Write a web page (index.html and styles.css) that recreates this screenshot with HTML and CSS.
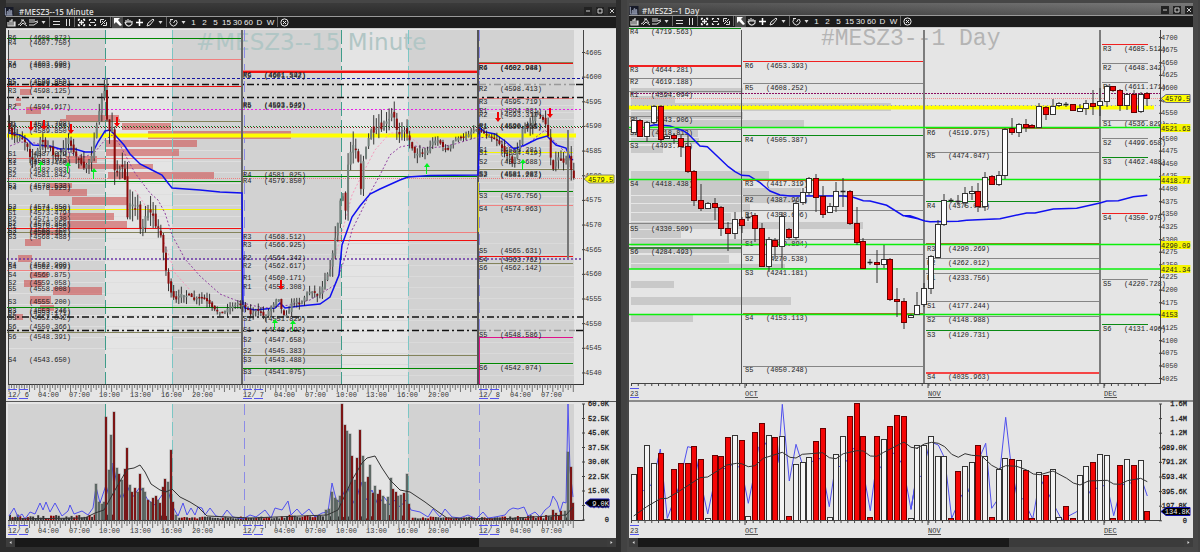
FILE: index.html
```html
<!DOCTYPE html>
<html lang="en">
<head>
<meta charset="utf-8">
<title>#MESZ3 charts</title>
<link rel="stylesheet" href="styles.css">
</head>
<body>
<svg class="defs" aria-hidden="true">
  <symbol id="i-bars" viewBox="0 0 11 11"><path d="M2 5v4h2V4h2v5M6 2v7h2V5h1v4H2" fill="none" stroke="#ddd" stroke-width="1.2"/></symbol>
  <symbol id="i-wave" viewBox="0 0 11 11"><path d="M1 8l2-1 3-4 3 4M3 9l3-3 4 3M4 3h3" fill="none" stroke="#ddd"/></symbol>
  <symbol id="i-lines" viewBox="0 0 11 11"><path d="M1 3h6M1 5h5l4-1M1 8h5l4-3" fill="none" stroke="#ddd"/></symbol>
  <symbol id="i-caret" viewBox="0 0 9 11"><path d="M2.500 4h4L4.500 7z" fill="#ddd"/></symbol>
  <symbol id="i-eq" viewBox="0 0 11 11"><path d="M2 4.500h7M2 7.500h7" stroke="#ddd"/></symbol>
  <symbol id="i-pause" viewBox="0 0 11 11"><path d="M4.500 2v7M7.500 2v7" stroke="#ddd"/></symbol>
  <symbol id="i-plusbox" viewBox="0 0 11 11"><path d="M2.500 4V2.500H4M7 2.500h1.500V4M8.500 7v1.500H7M4 8.500H2.500V7M3 5.500h5M5.500 3v5" fill="none" stroke="#eee" stroke-width="1.300"/></symbol>
  <symbol id="i-minusbox" viewBox="0 0 11 11"><path d="M2.500 4V2.500H4M7 2.500h1.500V4M8.500 7v1.500H7M4 8.500H2.500V7M3 5.500h5" fill="none" stroke="#ddd" stroke-width="1.200"/></symbol>
  <symbol id="i-slashbox" viewBox="0 0 11 11"><path d="M2.500 6V2.500H6M8.500 5v3.500H5M3 8l5-5M4 4l3 3" fill="none" stroke="#ddd"/></symbol>
  <symbol id="i-arrow" viewBox="0 0 11 11"><path d="M2 1h6L6 3l4 5-2 1-4-4-2 2z" fill="#fff"/></symbol>
  <symbol id="i-hand" viewBox="0 0 11 11"><path d="M3 6V3M5 5V2M7 5V3M9 7V4M2 5c1 5 5 5 7 2V5H3" fill="none" stroke="#ddd" stroke-width="1.200"/></symbol>
  <symbol id="i-plus" viewBox="0 0 11 11"><path d="M2 5.500h7M5.500 2v7" stroke="#fff" stroke-width="1.500"/></symbol>
  <symbol id="i-pencil" viewBox="0 0 11 11"><path d="M2 9l1-3 5-4 1 1-4 5z" fill="none" stroke="#ddd"/></symbol>
  <symbol id="i-clock" viewBox="0 0 11 11"><path d="M3 3a3.500 3.500 0 1 0 5 0M2 2.500h3M5.500 6l2-3" fill="none" stroke="#ddd"/></symbol>
  <symbol id="i-close" viewBox="0 0 11 11"><circle cx="5.500" cy="5.500" r="3.600" fill="none" stroke="#eee"/><path d="M4 4l3 3M7 4L4 7" stroke="#eee"/></symbol>
  <symbol id="i-logo" viewBox="0 0 10 10"><path d="M0 0h10v10H0z" fill="#171a28"/><path d="M1 1v8h8M3 9V5h1v4M5 9V3h1v6M7 9V4h1v5" fill="none" stroke="#9aa3b8"/></symbol>
</svg>
<main class="desktop">
  <section class="window">
    <header class="titlebar">
      <svg class="logo"><use href="#i-logo"/></svg>
      <h1 class="title">#MESZ3--15 Minute</h1>
      <button class="ctl" aria-label="Minimize"><svg viewBox="0 0 8 8"><path d="M2 4h4"/></svg></button>
      <button class="ctl" aria-label="Maximize"><svg viewBox="0 0 8 8"><path d="M2 2h4v4H2z"/></svg></button>
      <button class="ctl" aria-label="Close"><svg viewBox="0 0 8 8"><path d="M2 2l4 4M6 2L2 6"/></svg></button>
    </header>
    <nav class="toolbar" aria-label="Chart tools"></nav>
    <svg class="chart" id="intraday" viewBox="6 29 610 509" role="img" aria-label="15 minute chart"></svg>
    <div class="scroll"><button class="step" aria-label="Scroll left"><svg viewBox="0 0 8 9"><path d="M5 3L3 4.500 5 6z"/></svg></button><div class="track"></div><div class="thumb thumb-a"></div><button class="step" aria-label="Scroll right"><svg viewBox="0 0 8 9"><path d="M3 3l2 1.500L3 6z"/></svg></button></div>
  </section>
  <section class="window active">
    <header class="titlebar">
      <svg class="logo"><use href="#i-logo"/></svg>
      <h1 class="title">#MESZ3--1 Day</h1>
      <button class="ctl" aria-label="Minimize"><svg viewBox="0 0 8 8"><path d="M2 4h4"/></svg></button>
      <button class="ctl" aria-label="Maximize"><svg viewBox="0 0 8 8"><path d="M2 2h4v4H2z"/></svg></button>
      <button class="ctl" aria-label="Close"><svg viewBox="0 0 8 8"><path d="M2 2l4 4M6 2L2 6"/></svg></button>
    </header>
    <nav class="toolbar" aria-label="Chart tools"></nav>
    <svg class="chart" id="daily" viewBox="629 28 564 510" role="img" aria-label="Daily chart"></svg>
    <div class="scroll"><button class="step" aria-label="Scroll left"><svg viewBox="0 0 8 9"><path d="M5 3L3 4.500 5 6z"/></svg></button><div class="track"></div><div class="thumb thumb-b"></div><button class="step" aria-label="Scroll right"><svg viewBox="0 0 8 9"><path d="M3 3l2 1.500L3 6z"/></svg></button></div>
  </section>
</main>
<script src="charts.js"></script>
</body>
</html>
```
FILE: styles.css
```css
* { box-sizing: border-box; }
body { margin: 0; background: #444; font-family: "Open Sans", sans-serif; }
.defs { display: none; }
.desktop { display: grid; grid-template-columns: 627fr 573fr; align-items: start; min-height: 100vh; background: #424242; }
.window { border: solid #2d2d2d; border-width: 0 5px 5px 6px; margin-right: 6px; min-width: 0; }
.window.active { border-color: #474747; border-width: 0 5px 5px 2px; margin-right: 2px; }
.titlebar { display: flex; align-items: center; gap: 3px; height: 17px; padding: 3px 0 0 4px; border-top: 3px solid #464646; border-bottom: 1px solid #999; background: linear-gradient(#3b3b3b, #2a2a2a); }
.active .titlebar { height: 16px; padding: 2px 0 0 4px; background: linear-gradient(90deg, rgba(40,40,40,.5), rgba(120,120,120,.4)), linear-gradient(#7a7a7a, #4c4c4c); }
.logo { width: 10px; height: 9px; margin-left: -6px; }
.active .logo { margin-left: -4px; }
.title { flex: 1; margin: 0 0 0 2px; font-size: 8px; line-height: 9px; font-weight: 600; color: #ddd; }
.active .title { margin-left: 0; }
.ctl { width: 8px; height: 8px; margin: 0 0 0 1px; padding: 0; border: 0; background: #222; }
.ctl svg { display: block; width: 8px; height: 8px; fill: none; stroke: #ccc; }
.toolbar { display: flex; height: 12px; background: #1c1c1c; border-bottom: 1px solid #ccc; }
.tool { width: 11px; height: 11px; padding: 0; border: 0; background: none; color: #eee; font: 8px/11px "Liberation Sans", sans-serif; white-space: nowrap; display: flex; justify-content: center; }
.tool svg { width: 11px; height: 11px; flex: none; }
.tool.caret { width: 9px; }
.tool.caret svg { width: 9px; }
.tool.on { background: #4a4a4a; }
.sep { width: 1px; height: 10px; margin: 0 1px; background: #666; }
.chart { display: block; width: 100%; height: auto; background: #e5e5e5; }
.chart text { font-family: "Liberation Mono", monospace; font-size: 7px; fill: #1c1c1c; white-space: pre; }
.chart text.axis { fill: #333; }
.chart text.vol { fill: #222; text-anchor: end; stroke: #222; stroke-width: .3; }
.chart text.vtag { fill: #eee; text-anchor: end; }
.chart text.mark-a { font-family: "DejaVu Sans", sans-serif; font-size: 23px; fill: #b1c6c5; }
.chart text.mark-b { font-size: 23px; fill: #b4b4b4; }
.scroll { display: flex; height: 9px; background: #2d2d2d; }
.step { width: 9px; padding: 0; border: 0; background: #3d3d3d; }
.step svg { display: block; width: 9px; height: 9px; fill: #ddd; }
.track { flex: 1; background: #191919; }
.thumb { background: #3b3b3b; }
.thumb-a { width: 21%; }
.thumb-b { width: 31%; }
```
FILE: charts.js
```js
const NS = "http://www.w3.org/2000/svg";
const tools = ["bars", "wave", "lines", "caret", "|", "eq", "pause", "|", "plusbox", "minusbox", "slashbox", "|", "arrow", "hand", "plus", "pencil", "caret", "|", "clock", "caret", "#1", "#2", "#5", "#15", "#30", "#60", "#D", "#W", "|", "close"];
document.querySelectorAll(".toolbar").forEach(bar => {
  bar.innerHTML = tools.map(t => t === "|" ? '<span class="sep"></span>'
    : t[0] === "#" ? `<button class="tool">${t.slice(1)}</button>`
    : `<button class="tool${t === "caret" ? " caret" : t === "arrow" ? " on" : ""}" aria-label="${t}"><svg><use href="#i-${t}"/></svg></button>`).join("");
});

function pen(id) {
  const root = document.getElementById(id);
  const add = (tag, attrs, text) => {
    const el = document.createElementNS(NS, tag);
    for (const k in attrs) el.setAttribute(k, attrs[k]);
    if (text !== undefined) el.textContent = text;
    root.appendChild(el);
  };
  return {
    line: (x1, y1, x2, y2, c, w = 1, dash) => add("line", Object.assign({ x1, y1, x2, y2, stroke: c, "stroke-width": w }, dash ? { "stroke-dasharray": dash } : {})),
    rect: (x, y, width, height, fill, stroke) => add("rect", Object.assign({ x, y, width, height, fill }, stroke ? { stroke } : {})),
    poly: (points, c, w = 1, dash) => add("polyline", Object.assign({ points: points.join(" "), fill: "none", stroke: c, "stroke-width": w }, dash ? { "stroke-dasharray": dash } : {})),
    shape: (d, fill, stroke = "none") => add("path", { d, fill, stroke }),
    text: (x, y, s, cls = "") => add("text", { x, y: y + 2, class: cls }, s)
  };
}
let seed = 7;
const rnd = () => (seed = (seed * 16807) % 2147483647) / 2147483647;
const nums = s => s.trim().split(/\s+/).map(p => p.split(",").map(Number));
// "38 R6 4608.872; ..." -> pivot captions in two columns
const pivots = (p, x, s) => s.split(";").forEach(r => {
  const [y, n, v] = r.trim().split(" ");
  p.text(x, +y, n);
  p.text(x + 21, +y, `(${v})`);
});
// "y,colour[,2]": thick levels sit on whole units, thin ones on halves
const levels = (p, x1, x2, s) => s.trim().split(/\s+/).forEach(r => {
  const [y, c, w] = r.split(",");
  const yy = w ? Math.round(+y) : Math.floor(+y) + .5;
  p.line(x1, yy, x2, yy, c, w || 1);
});
const at = (pts, x) => {
  for (let i = 1; i < pts.length; i++) if (x <= pts[i][0]) {
    const [a, b] = pts[i - 1], [c, d] = pts[i];
    return b + (d - b) * (x - a) / (c - a);
  }
  return pts[pts.length - 1][1];
};

/* 15 minute chart */
{
  const p = pen("intraday");
  for (const [y, h] of [[30, 354], [404, 116]]) {
    p.rect(8, y, 566, h, "#d2d2d2");
    p.rect(105, y, 67, h, "#e4e4e4");
    p.rect(341, y, 67, h, "#e4e4e4");
  }
  for (let y = 150; y < 350; y += 11) p.line(8, y + .5, 242, y + .5, "#dedede");
  for (let y = 232; y < 384; y += 11) p.line(243, y + .5, 574, y + .5, "#dadada");
  for (let y = 105; y < 210; y += 7) p.line(479, y + .5, 574, y + .5, "#dcdcdc");
  p.text(196, 48, "#MESZ3--15 Minute", "mark-a");

  nums("20,89,11,6 16,98,5,3 15,103,6,3 26,107,15,7 66,115,53,4 60,119,60,3 122,123,49,7 148,131,143,3 148,135,143,4 106,140,91,7 106,149,73,7 66,156,31,7 78,164,75,5 108,172,106,7 49,183,23,5 49,189,38,7 72,197,56,8 60,213,54,7 67,221,60,7 30,230,30,5 25,239,16,7 18,255,14,7 30,272,18,6 24,280,18,7 53,287,49,8 30,296,21,8 40,305,14,6 15,314,8,6")
    .forEach(r => p.rect(...r, "rgba(207,92,92,.65)"));

  for (const [a, b] of [[30, 384], [404, 520]]) {
    for (const x of [105.5, 341.5]) p.line(x, a, x, b, "#3f9c8a", 1, "14 4");
    for (const x of [172.5, 408.5]) p.line(x, a, x, b, "#7cc6c4", 1, "14 4");
    for (const x of [244.5, 479.5]) p.line(x, a, x, b, "#8c8ce6", 1, "11 6");
  }
  const G = "#008800", S = "#f08080", R = "#f01010", O = "#83835a", K = "#111";
  levels(p, 7, 242, `38.5,${G} 59.5,${S} 86.500,${R} 121,${O} 158.500,${S} 181.500,${G} 209.500,#f5f500 228.500,${R} 232.500,${O} 270,${S} 307.500,${G} 332.500,${O}`);
  levels(p, 243, 478, `70,${S} 72,${R},2 170.500,${O} 176.500,${G} 232.500,${S} 240,${R} 355.500,${O} 368,${G}`);
  levels(p, 479, 573, `62.5,${O} 63.500,${R} 98,${S} 152.500,#f5f500 169,${O} 191.500,${G} 205,${S} 256,${R} 263.500,${O} 337,#e0128c 363,${G}`);
  p.line(7, 135.500, 576, 135.500, "#ff0", 4);
  p.line(7, 78.500, 583, 78.500, "#1414a0", 1, "3 2");
  for (const y of [97.500, 317]) p.line(7, y, 583, y, K, 1.5, "7 3 2 3");
  for (const y of [84.500, 330.500]) {
    p.line(7, y, 478, y, K, 1.5, "7 3 2 3");
    p.line(479, y, 575, y, "#999", 1.5, "7 3 2 3");
    p.line(576, y, 583, y, K, 1.5);
  }
  p.line(7, 109.500, 583, 109.500, "#e820e8", 1, "2 2");
  p.line(7, 126.500, 583, 126.500, "#0a7a20", 1, "1 2");
  p.line(8, 127.500, 583, 127.500, "#801010", 1, "1 2");
  p.line(7, 178.500, 583, 178.500, "#ef8080", 1, "1 1");
  p.line(7, 259, 583, 259, "#6a35a8", 1.5, "2 2");
  p.line(8.500, 30, 8.500, 384, "#444");
  p.line(242, 30, 242, 384, "#666", 2);
  p.line(478, 30, 478, 384, "#555", 2);
  p.line(478.500, 182, 478.500, 232, "#d2c810");
  p.line(479.500, 337, 479.500, 384, "#e0128c");

  pivots(p, 8, "38 R6 4608.872;43 R4 4607.750;64 R4 4603.690;66 A6 4603.998;82 R5 4599.850;84 R4 4599.358;91 R3 4598.125;107 R2 4594.917;124 R1 4591.798;126 R4 4591.256;131 R1 4589.850;154 S1 4587.079;161 R3 4583.779;163 S1 4583.400;170 S2 4582.083;175 S2 4581.842;186 S3 4578.533;188 R4 4578.925;207 S2 4574.850;209 R2 4574.339;213 S1 4573.479;219 R2 4571.038;224 S2 4570.858;226 R1 4570.456;231 S3 4568.750;233 S2 4569.361;237 S3 4568.488;265 R4 4562.900;267 S4 4562.499;275 S4 4560.875;283 S2 4559.058;289 S5 4558.008;302 S3 4555.200;311 R3 4553.246;313 S2 4553.171;318 S3 4552.042;327 S6 4550.366;337 S6 4548.391;360 S4 4543.650");
  pivots(p, 243, "75 R6 4601.592;76 R5 4601.342;105 R5 4593.546;106 R6 4593.922;175 R4 4581.025;181 R4 4579.850;237 R3 4568.512;245 R3 4566.925;258 R2 4564.342;266 R2 4562.617;278 R1 4560.171;287 R1 4558.308;319 S1 4551.829;330 S1 4548.692;340 S2 4547.658;351 S2 4545.383;360 S3 4543.488;372 S3 4541.075");
  pivots(p, 479, "68 R4 4602.988;68 R6 4602.944;89 R2 4598.413;102 R3 4595.719;111 R1 4594.081;115 R2 4593.313;126 R1 4590.406;127 P1 4590.985;150 S1 4585.281;153 S1 4584.419;162 S2 4583.688;174 S3 4581.087;175 S2 4581.283;196 S3 4576.756;209 S4 4574.063;251 S5 4565.631;260 S4 4563.762;268 S6 4562.142;335 S5 4548.586;368 S6 4542.074");

  const price = nums("9,128 13,137 17,135 22,138 27,145 30,157 33,160 37,152 41,137 45,148 49,143 53,155 57,157 61,153 65,146 69,137 72,150 76,156 80,162 84,168 88,162 92,155 95,135 98,118 101,102 105,89 107,120 110,133 113,123 114,170 118,172 122,165 125,180 127,220 131,198 134,210 138,205 141,235 144,222 147,210 150,212 153,215 155,226 159,228 162,240 164,258 167,277 170,290 173,297 177,300 180,293 185,296 190,295 194,300 198,297 203,298 208,302 213,308 218,312 223,313 228,308 233,306 238,303 243,305 247,308 251,315 256,310 261,312 265,318 270,308 274,304 278,296 281,308 284,315 288,315 291,303 295,300 299,304 303,300 307,293 311,291 315,293 318,296 322,288 326,276 330,270 334,245 338,222 341,195 344,197 346,215 348,165 352,145 355,145 359,165 361,190 364,155 368,140 371,130 374,133 378,125 382,130 386,122 390,118 393,110 396,128 399,135 403,128 408,135 412,148 416,155 420,152 424,155 428,150 433,141 438,140 443,147 448,150 453,141 458,138 463,137 468,135 473,130 478,129 482,132 487,135 492,137 497,140 502,148 506,155 510,158 513,165 516,152 520,145 523,125 526,127 530,126 534,118 538,113 542,118 546,125 548,135 551,160 554,172 557,155 560,160 564,163 568,155 573,178");
  const swing = nums("9,10 90,11 120,18 160,14 175,9 240,6 300,8 325,8 340,16 375,15 405,12 430,8 480,5 510,9 550,11 573,12");
  p.poly(nums("135,190 145,205 155,220 167,250 175,273 190,290"), "#f59abc", 1, "2 2");
  p.poly(nums("322,296 340,240 352,195 362,175 375,150 390,133 405,133 420,145"), "#f59abc", 1, "2 2");
  p.poly(nums("10,146 20,142 35,143 60,150 85,157 95,152 105,140 112,135 120,145 135,173 150,193 158,200 165,213 172,235 185,259 200,276 220,294 235,300 250,305 265,308 290,305 310,300 335,285 345,258 352,230 362,210 370,193 380,175 390,155 400,147 410,145 425,148 440,147 455,144 475,138 490,137 505,143 515,152 530,142 545,130 555,142 568,155"), "#9040a0", 1, "2 2");
  p.poly(nums("9,133 20,135 27,139 33,145 50,146 60,149 75,149 85,152 93,152 98,142 105,131 110,130 115,135 124,145 130,154 140,164 152,170 162,175 168,183 172,188 200,190 220,192 242,193 243,305 245,308 255,310 265,309 275,308 280,303 285,308 300,306 320,304 330,297 339,275 342,245 352,217 360,206 370,194 380,189 400,180 408,177 430,175.500 478,175 480,128 485,132 495,134 505,141 514,149 525,145 537,139 547,136 556,145 566,148 570,158 573,160"), "#1010f0", 1.500);
  let prev = 126;
  for (let x = 9.500; x < 574; x += 2.565) {
    const c = at(price, x), s = at(swing, x);
    const o = prev + (rnd() - .5) * s * .5;
    const top = Math.min(o, c), h = Math.max(1.500, Math.abs(c - o));
    p.line(x, top - rnd() * s * .9, x, top + h + rnd() * s * .9, "#222", .900);
    p.rect(x - 1, top, 2, h, c > o ? "#8b0a0a" : "#74827d");
    prev = c;
  }
  p.line(568, 130, 568, 258, "#777", 2);
  for (const [x, y] of nums("31,131 44,130 71,134 117,127 281,290 498,122 550,118"))
    p.shape(`M${x} ${y}l-3-4h2v-6h2v6h2z`, "#f00000");
  for (const [x, y] of nums("41,161 68,162 94,168 275,319 293,320 427,163 523,159"))
    p.shape(`M${x} ${y}l-3 4h2v7h1v-7h3z`, "#00f020");

  /* volume pane */
  const big = {};
  nums("96,36,0 99,18,0 102,16,0 104,18,0 106,103,1 109,50,0 111,85,0 114,108,1 117,52,0 119,46,1 122,40,0 125,51,1 127,72,1 130,35,0 132,28,1 135,32,1 138,28,0 140,46,1 143,32,0 145,28,0 148,20,1 151,18,0 153,22,1 156,24,1 158,20,0 160,17,1 163,33,1 165,41,1 168,38,0 171,70,1 173,18,1 176,5,0 326,10,0 329,11,0 332,28,0 335,22,0 337,20,0 340,24,0 342,116,1 345,95,1 347,89,0 350,86,0 352,64,1 355,40,0 357,62,1 360,90,1 363,64,0 365,38,0 368,43,1 370,55,0 373,27,1 375,34,0 378,26,1 380,30,1 383,24,0 385,16,0 388,23,0 391,42,0 393,31,1 396,28,1 398,24,0 401,25,0 404,27,1 407,46,0 409,16,1 553,10,1 556,7,1 561,9,1 565,9,0 568,68,0 571,53,1 573,17,1")
    .forEach(([x, h, r]) => big[x] = [h, r]);
  const grown = Object.keys(big).map(Number);
  for (let x = 10; x < 574; x += 2.565)
    if (!grown.some(g => Math.abs(g - x) < 1.300)) {
      const h = 1.500 + rnd() * ((x > 180 && x < 275) || (x > 412 && x < 510) ? 2 : 4);
      p.rect(x - 1, 520 - h, 2, h, rnd() > .6 ? "#800" : "#333");
    }
  p.poly(nums("9,516 14,508 18,517 22,514 25,519 30,512 35,514 40,503 43,510 46,502 50,512 55,503 62,516 68,511 70,505 74,514 82,511 88,515 93,508 96,487 100,503 106,485 110,500 113,463 118,490 122,500 127,485 132,498 140,487 148,500 155,505 162,495 168,490 172,505 178,516 183,503 187,515 191,508 195,515 198,507 202,508 205,515 210,508 216,516 222,517 227,510 233,517 243,519 250,515 256,517 265,510 271,518 275,508 282,510 288,501 291,515 297,509 302,515 309,509 315,517 322,513 328,512 332,483 337,503 342,497 347,485 351,497 355,505 361,482 366,500 372,490 378,505 384,497 390,505 394,500 400,507 406,500 411,510 420,512 428,517 433,509 440,517 445,509 452,517 460,518 468,515 476,519 483,512 488,518 495,517 505,515 509,510 513,508 518,509 524,507 528,516 535,512 540,517 545,510 550,506 553,496 557,502 560,512 563,502 566,503 568,404 570,470 573,497"), "#5050ee", 1);
  grown.forEach(x => p.rect(x - 1, 520 - big[x][0], 2, big[x][0], big[x][1] ? "#8b0a0a" : "#66736e", "#4446"));
  p.poly(nums("9,519 85,518 95,513 104,510 115,490 125,473 128,469 134,468 140,465 145,472 151,484 160,490 166,492 172,489 180,497 190,502 198,507 207,516 250,518 327,515 338,510 345,495 352,480 362,463 367,458 375,456 382,468 390,480 400,490 410,492 425,502 437,511 447,518 500,519 566,515 573,507"), "#333", 1);

  /* axes */
  p.line(6, 401.500, 616, 401.500, "#555");
  for (const y of [384, 520]) {
    p.line(8, y + .500, 584, y + .500, "#333");
    let i = 0;
    for (let x = 9; x < 575; x += 2.565, i++) p.line(x, y, x, y + (i % 4 === 0 ? 8 : i % 2 ? 4 : 6), "#555", .800);
    for (const [x, s] of [[8, "12/ 6"], [38, "04:00"], [69, "07:00"], [99, "10:00"], [130, "13:00"], [161, "16:00"], [192, "20:00"], [243, "12/ 7"], [274, "04:00"], [305, "07:00"], [336, "10:00"], [366, "13:00"], [397, "16:00"], [428, "20:00"], [479, "12/ 8"], [510, "04:00"], [541, "07:00"]]) {
      p.text(x, y + 11, s, "axis");
      if (s[2] === "/") {
        p.line(x, y + 5.500, x + 20, y + 5.500, "#5555ee", 1, "9 2");
        p.line(x, y + 14.500, x + 20, y + 14.500, "#5555ee", 1, "9 2");
      }
    }
  }
  p.line(583.500, 30, 583.500, 384, "#444");
  p.line(583.500, 404, 583.500, 521, "#444");
  for (let v = 4605; v >= 4540; v -= 5) {
    const y = 52.500 + (4605 - v) * 4.930;
    p.line(582, y, 585, y, "#444");
    p.text(585, y, String(v), "axis");
  }
  p.shape("M584 179l5-4h25v8h-25z", "#ffff00", "#886");
  p.text(588, 179.500, "4579.5");
  ["60.0K", "52.5K", "45.0K", "37.5K", "30.0K", "22.5K", "15.0K", "7.5K", "0"].forEach((s, i) => {
    p.line(582, 404 + i * 14.500, 585, 404 + i * 14.500, "#444");
    p.text(609, 404 + i * 14.500, s, "vol");
  });
  p.shape("M585 503l5-4h19v8h-19z", "#000", "#1616b0");
  p.text(609, 503.500, "9.0K", "vtag");
}

/* daily chart */
{
  const p = pen("daily");
  const third = (ox, oy, s) => nums(s).map(([x, y]) => [+(ox + x / 3).toFixed(1), +(oy + y / 3).toFixed(1)]);
  p.text(821, 43, "#MESZ3--1 Day", "mark-b");
  nums("631,88,112,5 631,96,44,7 631,103,260,8 631,112,112,7 631,120,173,7 631,130,67,7 631,138,68,6 631,146,32,7 631,171,138,9 631,180,112,8 631,188,170,7 631,196,176,7 631,204,119,8 631,213,100,8 631,222,232,7 631,230,50,8 631,239,170,7 631,247,110,6 631,255,98,8 631,264,154,5 631,281,43,7 631,297,160,8 631,314,62,8")
    .forEach(r => p.rect(...r, "#c9c9c9"));
  p.line(629, 107.500, 1154, 107.500, "#ff0", 4);
  const G = "#0a8a14", R = "#f02020", N = "#858585", B = "#b0642c";
  levels(p, 629, 741, `28.500,${G} 66,${R},2 78,${N} 91,${N} 116.500,${N} 129,${N} 141.500,${G} 179.500,${R} 223.500,${N} 247.500,#3c803c,2`);
  levels(p, 743, 924, `61,${R} 83.500,${N} 135.500,${G} 180.500,${R} 195.500,${N} 210.500,${N} 239.500,${N} 254.500,${N} 268,${N} 313.500,${B} 366,${N}`);
  levels(p, 926, 1100, `128.500,${B} 152,${N} 201.500,${G} 243.500,${B} 258.500,${N} 273,${N} 301.500,${N} 316,${N} 330.500,${G} 373,#f54545,2`);
  levels(p, 1102, 1148, `44.500,${R} 63.500,${N} 82.500,${N} 120,${N} 138.500,${N} 157.500,${G} 213.500,${R} 279.500,${N} 324.500,${G}`);
  p.line(631, 93.500, 1160, 93.500, "#8a1060", 1, "2 1");
  p.line(631, 98.500, 1160, 98.500, "#f09090", 1, "1 1");
  p.line(631, 105.500, 1160, 105.500, "#9090d8", 1, "1 3");

  pivots(p, 630, "32 R4 4719.563;70 R3 4644.281;82 R2 4619.188;95 R1 4594.094;120 S1 4543.906;133 S2 4518.813;146 S3 4493.719;184 S4 4418.438;229 S5 4330.509;252 S6 4284.493");
  pivots(p, 745, "66 R6 4653.393;88 R5 4608.252;140 R4 4505.387;184 R3 4417.319;200 R2 4387.961;215 R1 4358.606;244 S1 4299.894;259 S2 4270.538;273 S3 4241.181;318 S4 4153.113;370 S5 4050.248");
  pivots(p, 927, "133 R6 4519.975;156 R5 4474.047;206 R4 4375.018;249 R3 4290.269;263 R2 4262.012;278 R1 4233.756;306 S1 4177.244;320 S2 4148.988;335 S3 4120.731;377 S4 4035.963");
  pivots(p, 1103, "49 R3 4685.512;68 R2 4648.342;87 R1 4611.171;124 S1 4536.829;143 S2 4499.658;162 S3 4462.488;218 S4 4350.975;284 S5 4220.728;329 S6 4131.496");
  p.line(741.500, 30, 741.500, 383, "#555");
  p.line(924, 30, 924, 383, "#7c7c7c", 2);
  p.line(1100, 30, 1100, 383, "#7c7c7c", 2);

  p.poly(third(620, 0, "88,378 105,374 150,378 190,392 205,402 240,438 262,440 325,500 345,515 365,526 387,527 420,548 450,573 480,585 510,588 620,588 670,588 700,592 730,602 750,603 800,616 850,647 870,647 898,657").concat(
    third(900, 190, "15,78 35,80 75,93 90,95 175,94 200,91 300,86 380,69 405,69 460,57 530,55 600,39 620,33 655,32 700,20 742,16")), "#1010f0", 1.500);

  // high, open/close top, open/close bottom, low, 1 = down day, volume bar height
  const days = nums("117,120,132,133,0,46 119,120,136,137,1,53 121,122,136,142,0,75 105,106,122,124,0,57 105,106,139,143,1,67 135,136,138,139,0,1 133,135,138,144,1,51 134,138,146,157,1,57 135,146,171,173,1,57 170,171,200,206,1,74 184,200,208,211,1,61 202,203,208,209,0,2 198,203,207,220,1,65 206,207,228,236,1,64 222,228,233,251,1,83 212,219,233,239,0,85 217,219,225,233,1,80 213,217,218,221,0,4 213,215,228,242,1,88 223,228,266,267,1,97 237,239,266,272,0,85 238,240,246,259,1,83 212,216,246,268,0,84 228,229,237,239,1,4 200,203,237,240,0,56 188,192,202,205,0,58 177,178,192,195,0,63 174,178,197,212,1,79 186,196,214,218,1,92 203,206,212,213,0,3 182,191,206,212,0,66 178,191,192,207,0,84 190,191,223,225,1,104 207,223,242,245,1,117 238,241,268,269,1,84 259,262,263,265,1,3 250,262,264,283,1,84 245,259,264,268,0,81 258,259,299,301,1,94 288,299,301,317,1,105 298,301,322,329,1,104 314,315,317,318,0,2 292,305,314,315,0,75 283,288,304,307,0,75 255,256,288,294,0,84 220,224,257,258,0,64 194,200,224,226,0,64 198,200,201,203,1,2 195,201,202,205,1,49 187,193,202,207,0,54 186,191,193,200,0,58 183,191,206,212,1,75 172,177,206,211,0,64 175,176,184,185,1,3 171,175,184,186,0,51 128,129,175,179,0,62 118,128,132,135,1,61 123,124,132,137,0,60 119,124,127,132,1,50 124,125,127,128,1,2 103,106,127,128,0,48 106,107,114,120,1,45 99,106,114,115,0,51 102,103,105,107,0,3 102,104,105,107,1,14 104,104,110,111,1,2 104,108,111,112,0,45 100,103,108,115,0,54 90,103,106,115,1,58 88,101,105,116,0,66 85,86,101,107,0,65 86,86,90,92,1,2 89,90,105,111,1,55 93,94,105,110,0,61 90,94,112,112,1,55 92,94,111,113,0,60 92,93,98,106,1,9");
  const dx = i => 633.500 + i * 6.760;
  for (const y of [127.500, 179.500, 244.500, 269, 314.500]) p.line(629, y, 1160, y, "#0bef0b", 1.500);
  days.forEach(([h, t, b, l, down], i) => {
    const x = Math.round(dx(i));
    p.line(x, h, x, l, "#333");
    if (b - t < 2) p.line(x - 2.500, t + .500, x + 2.500, t + .500, "#222", 1.500);
    else p.rect(x - 2.500, t + .500, 5, b - t, down ? "#f50505" : "#fff", down ? "#600" : "#333");
  });

  p.poly(third(620, 395, "50,300 70,287 93,270 110,210 121,162 142,370 175,280 203,155 223,160 237,235 263,357 277,290 295,230 345,205 365,225 385,325 400,250 415,160 430,135 445,160 460,230 475,200 487,28 508,258 528,148 560,248 575,200 600,190 628,335 645,220 662,213 680,198 700,160 720,175 751,347 770,200 785,222 805,175 825,175 845,205 852,230 873,343 893,225").concat(
    third(900, 395, "33,343 50,235 65,247 90,140 115,150 134,190 155,370 185,300 205,290 225,220 257,145 275,340 290,318 317,67 332,200 350,300 370,313 398,372 420,250 445,295 462,330 485,374 530,350 550,325 575,280 600,280 620,265 641,362 665,270 700,262 722,245 742,303")), "#5050ee", 1);
  days.forEach(([, , , , down, v], i) => p.rect(Math.round(dx(i)) - 2.500, 520.500 - v, 5, v, down ? "#f50505" : "#f4f4f4", down ? "#600" : "#333"));
  p.poly(third(620, 395, "41,363 80,335 121,311 142,310 180,287 240,248 263,246 320,210 350,205 365,206 385,215 405,212 430,190 487,172 510,187 528,189 547,178 608,173 628,188 648,191 670,176 710,167 730,168 751,183 770,184 791,172 852,141 873,157 893,160").concat(
    third(900, 395, "50,160 73,147 95,142 115,145 134,155 155,178 175,187 195,176 215,181 245,183 275,211 296,222 317,212 350,214 380,225 400,237 420,239 459,228 500,250 520,264 540,270 565,258 622,256 641,267 661,268 682,257 722,250 742,260")), "#333", 1);

  p.line(629, 401, 1193, 401, "#8a8a8a", 2);
  for (const y of [383, 520]) {
    p.line(631, y + .500, 1161, y + .500, "#444");
    for (let i = 0; i < 77; i++) p.line(dx(i) - 2, y, dx(i) - 2, y + 3, "#444");
    p.text(630, y + 10.500, "23", "axis");
    p.line(630, y + 5.500, 639, y + 5.500, "#5555ee");
    p.line(630, y + 14.500, 639, y + 14.500, "#5555ee");
    for (const [x, s] of [[745, "OCT"], [928, "NOV"], [1104, "DEC"]]) {
      p.text(x, y + 10.500, s, "axis");
      p.line(x, y, x, y + 5, "#444");
      p.line(x, y + 14.500, x + 13, y + 14.500, "#555");
    }
  }
  p.line(1160.500, 30, 1160.500, 384, "#444");
  p.line(1160.500, 404, 1160.500, 521, "#444");
  for (let v = 4700; v >= 4025; v -= 25) {
    const y = 37.500 + (4700 - v) * .5052;
    p.line(1159, y, 1162, y, "#444");
    p.text(1161, y, String(v), "axis");
  }
  for (const [y, s] of [[128, "4521.63"], [180, "4418.77"], [245, "4290.09"], [269, "4241.34"], [314, "4153"]]) {
    p.rect(1161, y - 4, s.length * 4.200, 8, "#f5f500");
    p.text(1161, y + .500, s);
  }
  p.shape("M1161 98.500l5-4h24v8h-24z", "#ffff00", "#668");
  p.text(1165, 99, "4579.5");
  ["1.6M", "1.4M", "1.2M", "989.0K", "791.2K", "593.4K", "395.6K", "197.8K", "0"].forEach((s, i) => {
    p.line(1159, 404 + i * 14.600, 1162, 404 + i * 14.600, "#444");
    p.text(1187, 404 + i * 14.600, s, "vol");
  });
  p.shape("M1161 511.500l5-4h24v8h-24z", "#000", "#1616b0");
  p.text(1190, 512, "134.8K", "vtag");
}
```
